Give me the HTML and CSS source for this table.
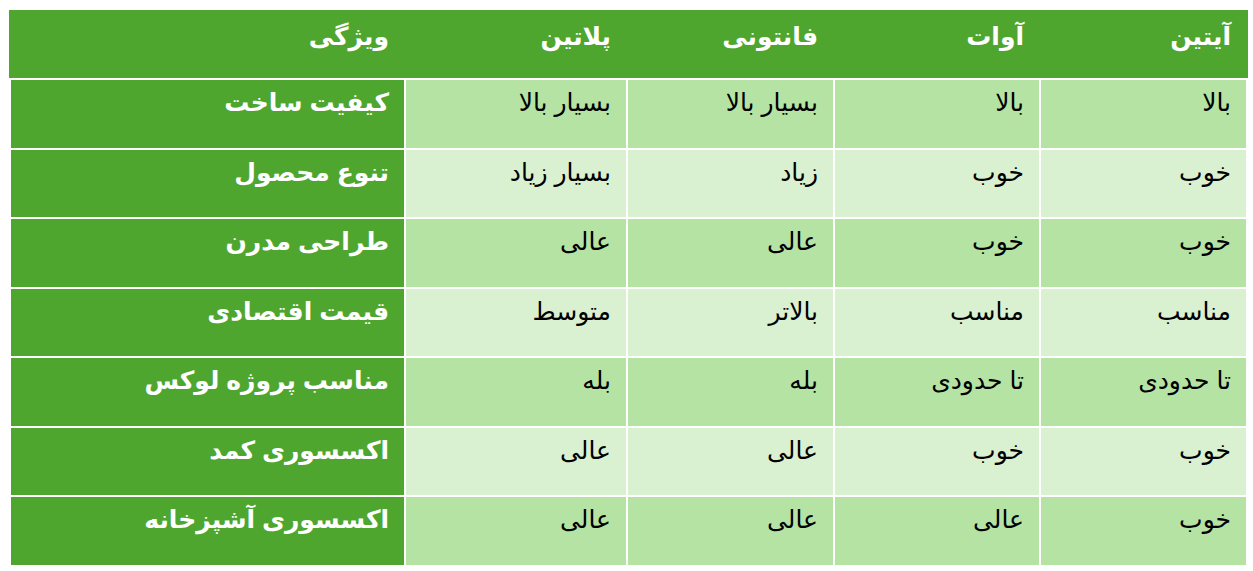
FILE: index.html
```html
<!DOCTYPE html>
<html lang="fa">
<head>
<meta charset="utf-8">
<link rel="stylesheet" href="styles.css">
</head>
<body>
<table class="cmp">
  <colgroup>
    <col class="c-feat"><col class="c2"><col class="c3"><col class="c4"><col class="c5">
  </colgroup>
  <thead>
    <tr class="head">
      <th>ویژگی</th><th>پلاتین</th><th>فانتونی</th><th>آوات</th><th>آیتین</th>
    </tr>
  </thead>
  <tbody>
    <tr class="band1"><th>کیفیت ساخت</th><td>بسیار بالا</td><td>بسیار بالا</td><td>بالا</td><td>بالا</td></tr>
    <tr class="band2"><th>تنوع محصول</th><td>بسیار زیاد</td><td>زیاد</td><td>خوب</td><td>خوب</td></tr>
    <tr class="band1"><th>طراحی مدرن</th><td>عالی</td><td>عالی</td><td>خوب</td><td>خوب</td></tr>
    <tr class="band2"><th>قیمت اقتصادی</th><td>متوسط</td><td>بالاتر</td><td>مناسب</td><td>مناسب</td></tr>
    <tr class="band1"><th>مناسب پروژه لوکس</th><td>بله</td><td>بله</td><td>تا حدودی</td><td>تا حدودی</td></tr>
    <tr class="band2"><th>اکسسوری کمد</th><td>عالی</td><td>عالی</td><td>خوب</td><td>خوب</td></tr>
    <tr class="band1"><th>اکسسوری آشپزخانه</th><td>عالی</td><td>عالی</td><td>عالی</td><td>خوب</td></tr>
  </tbody>
</table>
</body>
</html>
```
FILE: styles.css
```css
html, body {
  margin: 0;
  padding: 0;
  background: #ffffff;
}
body {
  padding: 10px 7px 0 9px;
  font-family: "Liberation Sans", "DejaVu Sans", sans-serif;
}
.cmp {
  border-collapse: collapse;
  table-layout: fixed;
  width: 1237px;
}
.c-feat { width: 395px; }
.c2 { width: 222px; }
.c3 { width: 207px; }
.c4 { width: 206px; }
.c5 { width: 207px; }
.cmp th, .cmp td {
  direction: rtl;
  text-align: right;
  vertical-align: top;
  border: 2px solid #ffffff;
  padding: 5px 15px 0 8px;
  font-size: 25px;
  line-height: 34px;
  box-sizing: border-box;
}
.cmp td {
  color: #000000;
  font-weight: normal;
}
.cmp th {
  color: #ffffff;
  font-weight: bold;
  background: #4fa62f;
}
.head th {
  border-left-color: #4fa62f;
  border-right-color: #4fa62f;
  border-top-color: #4fa62f;
  padding-top: 7px;
}
.band1 td { background: #b4e3a4; }
.band2 td { background: #daf1d1; }
.cmp tbody tr { height: 69.5px; }
.cmp tr.head { height: 68px; }
```
